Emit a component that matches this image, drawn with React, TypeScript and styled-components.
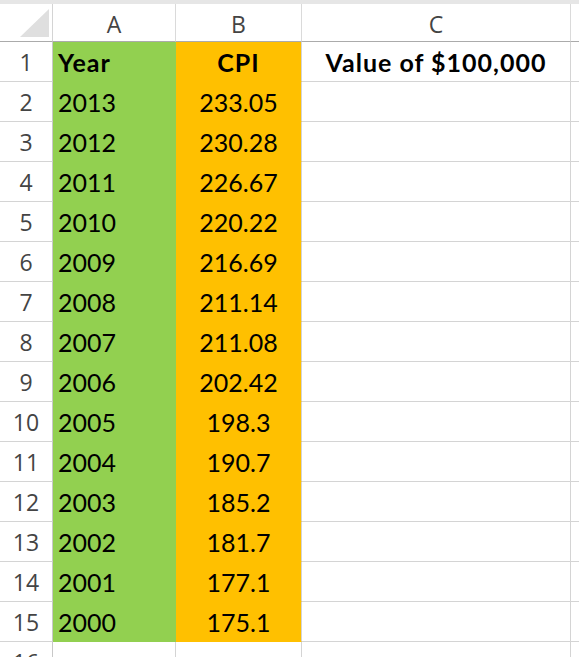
import React from "react";
import styled, { createGlobalStyle } from "styled-components";

const Global = createGlobalStyle`
  html, body { margin: 0; padding: 0; background: #ffffff; }
  body { width: 579px; height: 657px; overflow: hidden; }
`;

const GRID = "#d4d4d4";
const GREEN = "#92d050";
const ORANGE = "#ffc000";

const TopStrip = styled.div`
  height: 4px;
  background: #e6e6e6;
`;

const Sheet = styled.div`
  display: grid;
  grid-template-columns: 53px 123px 126px 269px 1fr;
  grid-auto-rows: 40px;
  grid-template-rows: 38px;
`;

const Corner = styled.div`
  box-sizing: border-box;
  border-right: 1px solid ${GRID};
  border-bottom: 1px solid #ababab;
  display: flex;
  align-items: flex-end;
  justify-content: flex-end;
  padding: 0 3px 4px 0;
`;

const Triangle = styled.div`
  width: 29px;
  height: 28px;
  background: #dfdfdf;
  clip-path: polygon(100% 0, 100% 100%, 0 100%);
`;

const ColHead = styled.div`
  box-sizing: border-box;
  border-right: 1px solid #dadada;
  border-bottom: 1px solid #ababab;
  display: flex;
  align-items: center;
  justify-content: center;
  font-family: "Open Sans", "Noto Sans", sans-serif;
  font-size: 23px;
  color: #444444;
  padding-top: 3px;
`;

const RowHead = styled.div`
  box-sizing: border-box;
  border-right: 1px solid #c8c8c8;
  border-bottom: 1px solid ${GRID};
  display: flex;
  align-items: center;
  justify-content: center;
  font-family: "Open Sans", "Noto Sans", sans-serif;
  font-size: 23px;
  color: #444444;
  padding-top: 1px;
`;

const Cell = styled.div<{ $fill?: string; $edge?: string; $align?: string; $bold?: boolean }>`
  box-sizing: border-box;
  background: ${(p) => p.$fill || "transparent"};
  border-right: 1px solid ${(p) => p.$edge || GRID};
  border-bottom: 1px solid ${(p) => p.$fill || GRID};
  display: flex;
  align-items: center;
  justify-content: ${(p) => p.$align || "flex-start"};
  padding: 0 5px 0 5px;
  font-family: "Lato", "Liberation Sans", sans-serif;
  font-size: 25px;
  font-weight: ${(p) => (p.$bold ? 700 : 400)};
  letter-spacing: ${(p) => (p.$bold ? "1px" : "0")};
  color: #000000;
  white-space: nowrap;
`;

const data: [string, string][] = [
  ["2013", "233.05"],
  ["2012", "230.28"],
  ["2011", "226.67"],
  ["2010", "220.22"],
  ["2009", "216.69"],
  ["2008", "211.14"],
  ["2007", "211.08"],
  ["2006", "202.42"],
  ["2005", "198.3"],
  ["2004", "190.7"],
  ["2003", "185.2"],
  ["2002", "181.7"],
  ["2001", "177.1"],
  ["2000", "175.1"],
];

export default function App() {
  return (
    <>
      <Global />
      <TopStrip />
      <Sheet>
        <Corner>
          <Triangle />
        </Corner>
        <ColHead>A</ColHead>
        <ColHead>B</ColHead>
        <ColHead>C</ColHead>
        <ColHead />

        <RowHead>1</RowHead>
        <Cell $fill={GREEN} $edge={GREEN} $bold>Year</Cell>
        <Cell $fill={ORANGE} $align="center" $bold>CPI</Cell>
        <Cell $align="center" $bold>Value of $100,000</Cell>
        <Cell />

        {data.map(([year, cpi], i) => (
          <React.Fragment key={year}>
            <RowHead>{i + 2}</RowHead>
            <Cell $fill={GREEN} $edge={GREEN}>{year}</Cell>
            <Cell $fill={ORANGE} $align="center">{cpi}</Cell>
            <Cell />
            <Cell />
          </React.Fragment>
        ))}

        <RowHead>16</RowHead>
        <Cell />
        <Cell />
        <Cell />
        <Cell />
      </Sheet>
    </>
  );
}
